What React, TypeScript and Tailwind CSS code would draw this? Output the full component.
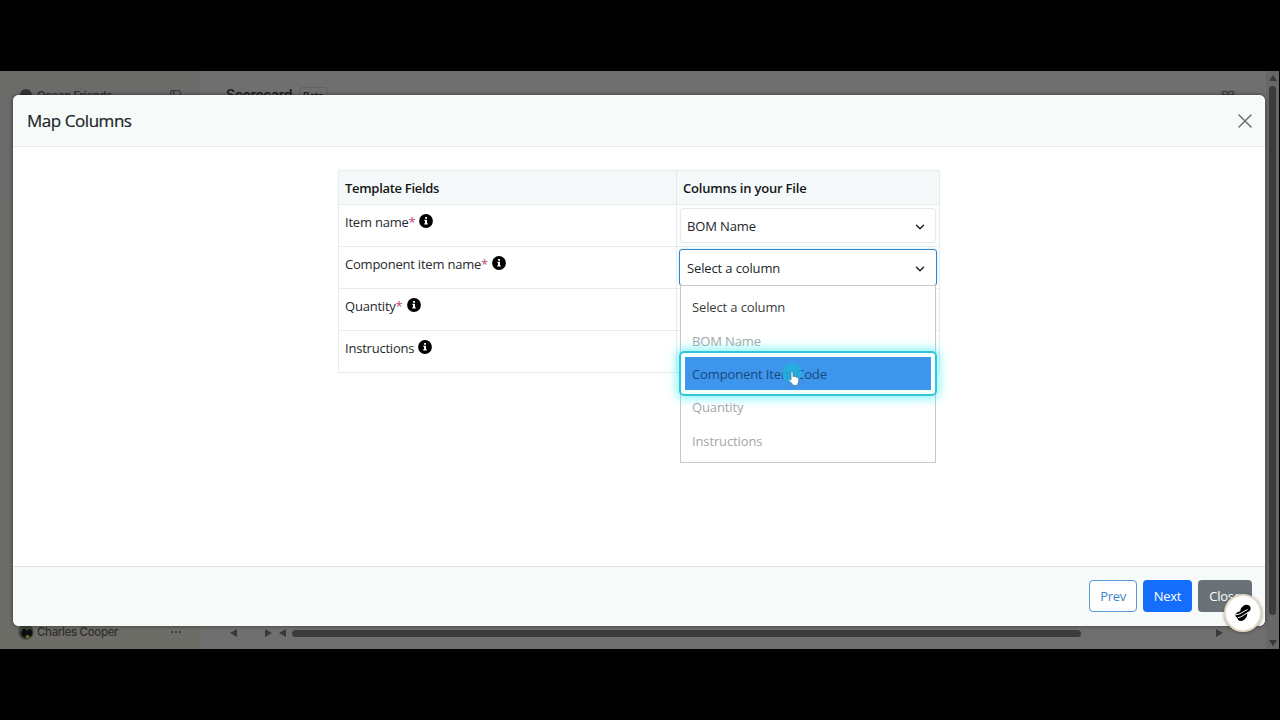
import { ChevronDown, PanelLeft } from "lucide-react";

const fields = [
  { name: "Item name", required: true, value: "BOM Name" },
  { name: "Component item name", required: true, value: "Select a column", open: true },
  { name: "Quantity", required: true },
  { name: "Instructions", required: false },
];

const options = [
  { label: "Select a column", color: "text-[#3a3c3e]" },
  { label: "BOM Name", color: "text-[#a4a7a9]" },
  { label: "Component Item Code", color: "text-[#174a7c]", active: true },
  { label: "Quantity", color: "text-[#a4a7a9]" },
  { label: "Instructions", color: "text-[#a4a7a9]" },
];

function InfoIcon() {
  return (
    <svg viewBox="0 0 14 14" className="ml-1 mt-[1px] h-[14px] w-[14px] shrink-0">
      <circle cx="7" cy="7" r="6.9" fill="#000" />
      <path d="M6.1 3h1.9v1.8H6.1zM5.4 5.8H8v3.5h.7v1.2H5.3V9.3H6V7h-.6z" fill="#fff" />
    </svg>
  );
}

function Arrow({ className, d }: { className: string; d: string }) {
  return (
    <svg viewBox="0 0 8 8" className={`h-2 w-2 shrink-0 ${className}`}>
      <path d={d} fill="#393939" />
    </svg>
  );
}

function Sidebar() {
  return (
    <div className="flex w-[200px] flex-col justify-between bg-gradient-to-b from-[#6b6b6a] to-[#6d6c66] text-[#303030]">
      <div className="flex items-center pl-5 pr-[18px] pt-[14px]">
        <div className="h-3 w-3 rounded-full bg-[#343434]" />
        <span className="ml-[5px] text-[11px] font-semibold leading-5 tracking-[-0.15px]">Ocean Friends</span>
        <PanelLeft className="ml-auto h-[13px] w-[13px]" strokeWidth={1.7} />
      </div>
      <div className="flex items-center pb-[7px] pl-[18px] pr-[19px]">
        <svg viewBox="0 0 16 16" className="h-4 w-4">
          <circle cx="8" cy="8" r="7.7" fill="#41463a" />
          <path d="M3 11c0-4 2-7 4-6l2 2 2-2c3 0 4 3 3 6l-2 2-2-3-3 4z" fill="#0d0e0b" />
          <path d="M7 13l2-2 3 2-2 1z" fill="#77712b" />
        </svg>
        <span className="ml-[3px] text-[11.5px] font-medium leading-5 tracking-[-0.35px]">Charles Cooper</span>
        <div className="ml-auto flex gap-[2px]">
          <i className="h-[2px] w-[2px] rounded-full bg-[#333]" />
          <i className="h-[2px] w-[2px] rounded-full bg-[#333]" />
          <i className="h-[2px] w-[2px] rounded-full bg-[#333]" />
        </div>
      </div>
    </div>
  );
}

function Page() {
  return (
    <div className="flex h-full font-['Inter',sans-serif]">
      <Sidebar />
      <div className="flex flex-1 flex-col justify-between">
        <div className="flex items-start pl-[26px] pr-[31px] pt-[14px] text-[#1d1d1d]">
          <span className="text-[14px] font-semibold leading-5 tracking-[-0.4px]">Scorecard</span>
          <span className="ml-[7px] mt-[2px] rounded border border-[#626262] px-[3px] text-[10px] font-medium leading-[17px] tracking-[-0.2px]">
            Beta
          </span>
          <svg viewBox="0 0 14 14" className="ml-auto mt-[5px] h-[14px] w-[14px]" fill="none" stroke="#3d3d3d" strokeWidth="1.4">
            <path d="M1.5 6V3c0-2.5 4-2.5 5.5 0 1.5-2.5 5.500-2.500 5.500 0v3M1.500 5h11v8h-11zM7 3v10" />
          </svg>
        </div>
        <div className="flex items-center pb-3 pl-[30px] pr-[43px]">
          <Arrow className="" d="M7 0v8L0 4z" />
          <Arrow className="ml-[26px]" d="M1 0v8l7-4z" />
          <Arrow className="ml-[7px]" d="M7 0v8L0 4z" />
          <div className="ml-[5px] h-[7px] w-[789px] rounded-full bg-[#3c3c3c]" />
          <Arrow className="ml-auto" d="M1 0v8l7-4z" />
        </div>
      </div>
      <div className="flex w-[13px] flex-col items-center bg-[#686868] pb-[2px] pt-[3px]">
        <Arrow className="" d="M4 1l4 6H0z" />
        <div className="mb-[24px] mt-[4px] w-[7px] flex-1 rounded-full bg-[#3b3b3b]" />
        <Arrow className="" d="M0 1h8L4 7z" />
      </div>
    </div>
  );
}

function OptionsList() {
  return (
    <div className="absolute left-[3px] top-[38px] z-10 h-[178px] w-[256px] border border-[#c6c8ca] bg-white px-1 pt-[4px]">
      {options.map((o) => (
        <div
          key={o.label}
          className={`relative flex h-[33.3px] items-center pl-[7px] pt-[3px] text-[13px] tracking-[-0.13px] ${o.color} ${o.active ? "bg-[#3d95ec]" : ""}`}
        >
          <span>{o.label}</span>
          {o.active && (
            <>
              <div className="absolute -inset-x-[6px] -top-[6px] -bottom-[6px] rounded-[5px] border-2 border-[#35c5da] shadow-[0_0_10px_3px_rgba(70,238,248,0.6),inset_0_0_0_3.5px_#f1ffff]" />
              <div className="absolute left-[97px] top-[6px] h-[20px] w-[20px] rounded-full bg-[#22b0dc]/85" />
              <svg viewBox="0 0 12 16" className="absolute left-[103px] top-[14px] h-[16px] w-[12px]">
                <path
                  d="M3 1.8c0-1.4 2-1.4 2 0v4l.3-.1c.3-.7 1.5-.6 1.7.2.5-.5 1.6-.3 1.7.5.8-.4 1.9 0 1.9 1v3.1c0 1-.8 1.7-.8 2.6v1.2H4.4v-1.2L1.1 9.8C.4 8.7 1.6 7.8 3 9z"
                  fill="#fff"
                  stroke="#46759b"
                  strokeWidth=".7"
                />
              </svg>
            </>
          )}
        </div>
      ))}
    </div>
  );
}

function SelectBox({ value, open }: { value: string; open?: boolean }) {
  return (
    <div
      className={`flex items-center justify-between rounded-[3px] border bg-white pt-[2px] text-[13px] tracking-[-0.13px] text-[#222527] ${
        open
          ? "mx-[2px] mt-[2px] h-[37px] border-[#3d82c6] pl-[7px] pr-[9px] shadow-[0_0_3px_#bceaf7]"
          : "mx-[3px] mt-[3px] h-[35px] border-[#e6e9ea] pl-[6px] pr-[8px]"
      }`}
    >
      <span>{value}</span>
      <ChevronDown className="h-[14px] w-[14px] text-[#26292b]" strokeWidth={2.6} />
    </div>
  );
}

function MappingTable() {
  return (
    <div className="mx-auto mt-[23px] w-[602px] border border-[#e5eeee] text-[13px] text-[#26292c]">
      <div className="flex h-[33px] bg-[#f6f9f9] pt-[2px] text-[13px] font-semibold text-[#131517]">
        <div className="-mt-[2px] flex w-[338px] items-center border-r border-[#e3e9e9] pl-[6px] pt-[2px] tracking-[-0.3px]">
          Template Fields
        </div>
        <div className="flex items-center pl-[6px] tracking-[-0.2px]">Columns in your File</div>
      </div>
      {fields.map((f) => (
        <div key={f.name} className="flex h-[42px] border-t border-[#e5eeee]">
          <div className="flex w-[338px] items-start border-r border-[#e5eeee] pl-[6px] pt-[8px] leading-[18px] tracking-[-0.22px]">
            <span>{f.name}</span>
            {f.required && <span className="text-[#c4476a]">*</span>}
            <InfoIcon />
          </div>
          <div className="relative flex-1">
            {f.value && <SelectBox value={f.value} open={f.open} />}
            {f.open && <OptionsList />}
          </div>
        </div>
      ))}
    </div>
  );
}

function MapColumnsModal() {
  return (
    <div className="absolute left-[13px] top-[24px] flex h-[531px] w-[1252px] flex-col overflow-hidden rounded-[6px] bg-white shadow-[0_0_4px_rgba(0,0,0,0.5)]">
      <div className="flex h-[52px] items-center justify-between border-b border-[#e6ebeb] bg-[#f6faf9] pl-[14px] pr-[13px]">
        <h2 className="text-[17px] font-medium tracking-[-0.45px] text-[#212529] [-webkit-text-stroke:0.2px_#212529]">
          Map Columns
        </h2>
        <svg viewBox="0 0 14 14" className="h-[14px] w-[14px]">
          <path d="M1 1l12 12M13 1L1 13" stroke="#6e7070" strokeWidth="1.5" strokeLinecap="round" />
        </svg>
      </div>
      <div className="flex-1">
        <MappingTable />
      </div>
      <div className="flex h-[60px] items-start justify-end gap-[6px] border-t border-[#dde5e5] bg-[#f6faf9] pr-[13px] pt-[13px] text-[13px] tracking-[-0.3px]">
        <button className="h-[32px] w-[48px] rounded-[4px] border border-[#5b98d4] bg-white pt-px text-[#4384c8]">Prev</button>
        <button className="h-[32px] w-[49px] rounded-[4px] bg-[#156efb] pt-px text-white">Next</button>
        <button className="h-[32px] w-[54px] rounded-[4px] bg-[#6a7278] pt-px text-white">Close</button>
      </div>
    </div>
  );
}

function ChatBubble() {
  return (
    <div className="absolute left-[1224px] top-[523px] flex h-[38px] w-[38px] items-center justify-center rounded-full border-2 border-[#e2d8c8] bg-white shadow-[0_1px_3px_rgba(60,50,30,0.5)]">
      <svg viewBox="0 0 16 18" className="h-[18px] w-[16px]">
        <path
          d="M8.500 1.800C10.500.2 13 .3 14.500 1.800c1.500 1.600 1.500 4-.1 5.600l-2.300 2c.4 2-.2 3.600-1.700 5.100-1.300 1.500-2.600 2.500-4.400 2.600-2.100.1-3.500-1.300-3.400-3.200C.2 13.300-.2 10.500 1.500 8.900 2.600 7.900 3.900 7.600 5.200 7.500 5.200 5 6.500 3.300 8.500 1.800z"
          fill="#000"
        />
        <path d="M.8 10.800C5.500 10.500 8 7.500 12.500 5.500M3 13.600c3.500-.3 6.500-3.200 11.500-6.200" stroke="#fff" strokeWidth="1" fill="none" />
      </svg>
    </div>
  );
}

export default function App() {
  return (
    <div className="h-[720px] w-[1280px] overflow-hidden bg-black pt-[71px] font-['Open_Sans',sans-serif]">
      <div className="relative h-[578px] w-[1279px] overflow-hidden bg-[#6f6f6f]">
        <Page />
        <MapColumnsModal />
        <ChatBubble />
      </div>
    </div>
  );
}
